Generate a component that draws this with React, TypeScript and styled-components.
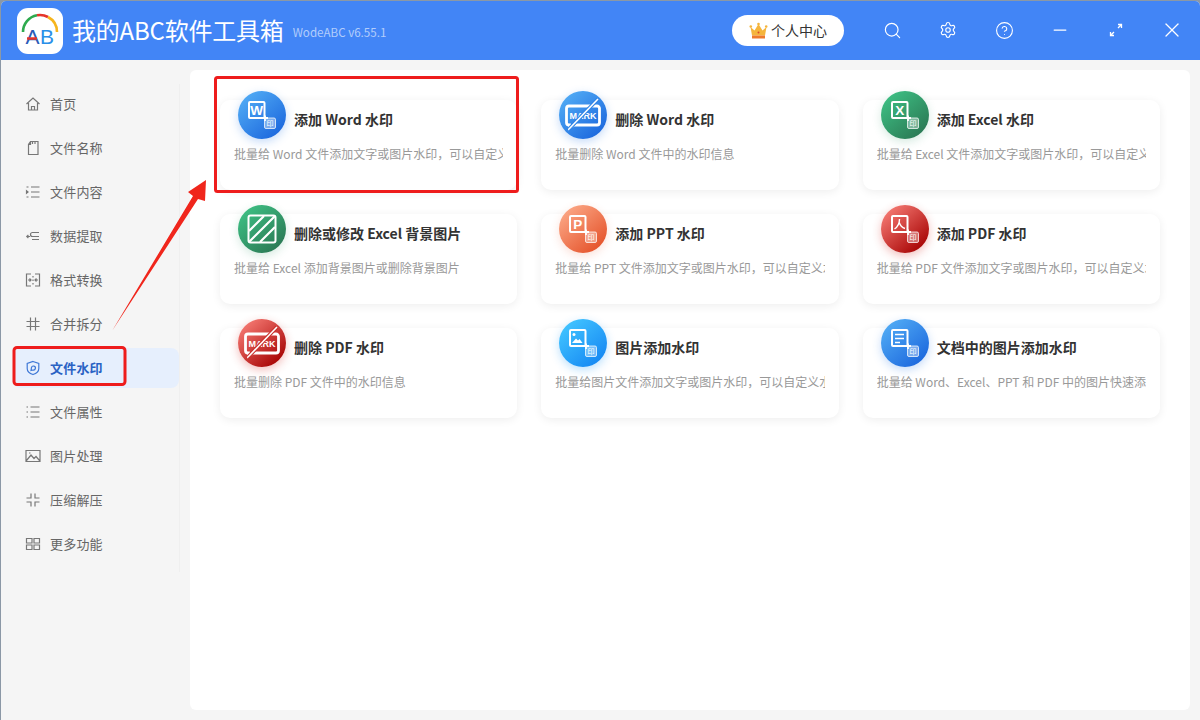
import React from "react";
import styled, { createGlobalStyle } from "styled-components";
import { Search, Settings, CircleHelp, Minus, X } from "lucide-react";

const FONT = `"Noto Sans CJK SC", "Noto Sans", sans-serif`;

const Global = createGlobalStyle`
  html, body { margin: 0; padding: 0; width: 1200px; height: 720px; overflow: hidden; background: #8b98a6; }
  #root { width: 1200px; height: 720px; }
  * { box-sizing: border-box; }
`;

const Win = styled.div`
  position: relative;
  width: 1199px;
  height: 719px;
  margin: 1px 0 0 1px;
  border-radius: 5px 5px 0 0;
  overflow: hidden;
  background: #f5f5f5;
  font-family: ${FONT};
  display: flex;
  flex-direction: column;
`;

const TitleBar = styled.header`
  height: 59px;
  flex: none;
  background: #4285f6;
  display: flex;
  align-items: center;
  padding-left: 16px;
`;
const LogoBox = styled.div`
  width: 46px;
  height: 46px;
  border-radius: 11px;
  background: #fff;
  flex: none;
  svg { display: block; }
`;
const AppName = styled.h1`
  margin: -2px 0 0 9px;
  font-size: 24px;
  line-height: 32px;
  font-weight: 400;
  color: #fff;
  letter-spacing: -0.2px;
  white-space: nowrap;
`;
const Version = styled.span`
  margin: 2px 0 0 9px;
  font-size: 11.6px;
  color: rgba(255, 255, 255, 0.6);
  white-space: nowrap;
`;
const HeadRight = styled.div`
  margin-left: auto;
  display: flex;
  align-items: center;
`;
const UserBtn = styled.button`
  width: 112px;
  height: 31px;
  border: none;
  border-radius: 16px;
  background: #fff;
  display: flex;
  align-items: center;
  justify-content: center;
  gap: 3px;
  font-family: ${FONT};
  font-size: 14px;
  color: #333;
  padding: 0 0 2px;
  margin-right: 20px;
  svg { margin-top: 2px; }
`;
const HeadIcon = styled.span`
  width: 56px;
  height: 24px;
  display: flex;
  align-items: center;
  justify-content: center;
  color: #fff;
  margin-top: -1px;
`;

const Body = styled.div`
  flex: 1;
  display: flex;
  min-height: 0;
`;
const Side = styled.nav`
  width: 189px;
  flex: none;
  padding: 24px 0 0 12px;
  display: flex;
  flex-direction: column;
`;
const SideInner = styled.div`
  width: 167px;
  display: flex;
  flex-direction: column;
  gap: 4px;
  border-right: 1px solid #efefef;
  padding-bottom: 8px;
`;
const NavItem = styled.div<{ $active?: boolean }>`
  height: 40px;
  display: flex;
  align-items: center;
  padding-left: 12px;
  gap: 9px;
  border-radius: ${(p) => (p.$active ? "8px" : "0")};
  background: ${(p) => (p.$active ? "#e6effd" : "transparent")};
  color: ${(p) => (p.$active ? "#2a62c4" : "#666")};
  font-size: 13px;
  font-weight: ${(p) => (p.$active ? 700 : 400)};
  letter-spacing: 0.2px;
  svg { flex: none; display: block; }
`;
const NavLabel = styled.span`
  margin-top: -2px;
`;

const Panel = styled.main`
  width: 1000px;
  height: 640px;
  margin-top: 10px;
  background: #fff;
  border-radius: 6px;
  padding: 29.7px 30px 0 30px;
  display: grid;
  grid-template-columns: repeat(3, 1fr);
  grid-auto-rows: 90px;
  gap: 24px;
  align-content: start;
`;
const Card = styled.article`
  min-width: 0;
  background: #fff;
  border-radius: 10px;
  box-shadow: 0 2px 10px rgba(0, 0, 0, 0.07);
  padding: 0 14px;
`;
const CardHead = styled.div`
  display: flex;
  align-items: center;
  gap: 8px;
  margin: -9px 0 0 4px;
  height: 48px;
`;
const Badge = styled.div<{ $glow: string }>`
  width: 48px;
  height: 48px;
  border-radius: 50%;
  flex: none;
  box-shadow: 0 3px 10px ${(p) => p.$glow};
  svg { display: block; }
`;
const CardTitle = styled.h3`
  margin: 9px 0 0;
  font-size: 14px;
  font-weight: 700;
  color: #333;
  white-space: nowrap;
`;
const CardDesc = styled.p`
  margin: 5px 0 0;
  font-size: 12px;
  line-height: 20px;
  color: #999;
  white-space: nowrap;
  overflow: hidden;
`;

const Overlay = styled.svg`
  position: absolute;
  left: -1px;
  top: -1px;
  pointer-events: none;
`;

const nav: [string, React.ReactNode][] = [
  ["首页", <path d="M1.500 8 8 2l6.500 6M3.500 7v7h9V7M6.500 14v-3.500h3V14" />],
  ["文件名称", <path d="M5.500 1.500h7.500v13H3.500V4.500zM5.500 1.500v3h-2M7.500 1.500v2.500M10 1.500v2.500" />],
  ["文件内容", <path d="M6 3h8.500M6 8h8.500M6 13h8.500M1.500 3h2M1.500 13h2M1.500 6.800 3 8l-1.500 1.200z" />],
  ["数据提取", <path d="M14 4.500H7.500a2 2 0 0 0 0 4H14M14 11.500H7M5 8.500H2M3.400 7l-1.600 1.500L3.400 10" />],
  ["格式转换", <path d="M6 2H1.500v12H6M10 2h4.500v12H10M8 4v1.500M8 7.500v1.500M8 11v1.500M3 8h3M10 8h3M4.500 6.500 6 8 4.500 9.500M11.500 6.500 10 8l1.500 1.500" />],
  ["合并拆分", <path d="M5.500 1.500v13M10.500 1.500v13M1.500 5.500h13M1.500 10.500h13" />],
  ["文件水印", <path d="M8 1.500l5.800 2v5c0 3-2.600 5-5.800 6-3.200-1-5.800-3-5.800-6v-5zM6 10.500l.5-3a2 2 0 1 1 1.500 2.500z" />],
  ["文件属性", <path d="M5.500 3h9M5.500 8h9M5.500 13h9M1.500 3h1.500M1.500 8h1.500M1.500 13h1.500" />],
  ["图片处理", <path d="M1 2.500h14v11H1zM1.500 12.500 6 7l3 3.500 2-2 3.500 4M4 5h1.500" />],
  ["压缩解压", <path d="M6 1.500V6H1.500M10 1.500V6h4.500M6 14.500V10H1.500M10 14.500V10h4.500" />],
  ["更多功能", <path d="M1.500 2.500h5.500v4.500H1.500zM9 2.500h5.500v4.500H9zM1.500 9h5.500v4.500H1.500zM9 9h5.500v4.500H9z" />],
];

type Tone = "blue" | "green" | "orange" | "red" | "sky";
const tones: Record<Tone, [string, string, string]> = {
  blue: ["#4fa9f4", "#1d69de", "rgba(45,125,235,.28)"],
  green: ["#3dbd82", "#2b7a55", "rgba(45,150,100,.2)"],
  orange: ["#fba583", "#e5542c", "rgba(235,100,60,.2)"],
  red: ["#f3766f", "#a80505", "rgba(215,50,45,.32)"],
  sky: ["#41c3ff", "#1689f3", "rgba(40,160,250,.32)"],
};

const DocBox = ({ children }: { children?: React.ReactNode }) => (
  <>
    <rect x="11" y="11" width="15.500" height="16" rx="1" fill="none" stroke="#fff" strokeWidth="2" />
    {children}
    <path d="M27 24.500v5.500M24.500 27h5.500" stroke="#fff" strokeWidth="1.800" />
    <rect x="26.500" y="27" width="11" height="10.500" rx="1.500" fill="rgba(255,255,255,.38)" stroke="rgba(255,255,255,.75)" strokeWidth="1" />
    <text x="32" y="35.200" fontSize="7" textAnchor="middle" fill="#fff" fontFamily={FONT}>印</text>
  </>
);
const Letter = ({ c }: { c: string }) => (
  <text x="18.700" y="24.200" fontSize="13.500" fontWeight="700" textAnchor="middle" fill="#fff" fontFamily="Liberation Sans, sans-serif">{c}</text>
);
const MarkArt = ({ fill }: { fill: string }) => (
  <>
    <path d="M10 15h28a2.500 2.500 0 0 1 2.500 2.500v14a2.500 2.500 0 0 1-2.500 2.500H15l-4.500 3v-3H10a2.500 2.500 0 0 1-2.500-2.500v-14A2.500 2.500 0 0 1 10 15z" fill="none" stroke="#fff" strokeWidth="2.800" />
    <text x="24" y="28" fontSize="9" fontWeight="700" textAnchor="middle" fill="#fff" fontFamily="Liberation Sans, sans-serif">MARK</text>
    <path d="M39 8 10 38" stroke={fill} strokeWidth="3.800" />
    <path d="M39 8 10 38" stroke="#fff" strokeWidth="1.600" />
  </>
);

type Item = { tone: Tone; title: string; desc: string; art: React.ReactNode };
const items: Item[] = [
  { tone: "blue", title: "添加 Word 水印", desc: "批量给 Word 文件添加文字或图片水印，可以自定义水印内容和位置", art: <DocBox><Letter c="W" /></DocBox> },
  { tone: "blue", title: "删除 Word 水印", desc: "批量删除 Word 文件中的水印信息", art: <MarkArt fill="#2f84e6" /> },
  { tone: "green", title: "添加 Excel 水印", desc: "批量给 Excel 文件添加文字或图片水印，可以自定义水印内容和位置", art: <DocBox><Letter c="X" /></DocBox> },
  {
    tone: "green", title: "删除或修改 Excel 背景图片", desc: "批量给 Excel 添加背景图片或删除背景图片",
    art: <>
      <rect x="10.500" y="10.500" width="27" height="27" rx="2" fill="none" stroke="#fff" strokeWidth="2" />
      <path d="M11 26 26 11M11 37 37 11M22 37 37 22" stroke="#fff" strokeWidth="2.200" />
    </>,
  },
  { tone: "orange", title: "添加 PPT 水印", desc: "批量给 PPT 文件添加文字或图片水印，可以自定义水印内容和位置", art: <DocBox><Letter c="P" /></DocBox> },
  {
    tone: "red", title: "添加 PDF 水印", desc: "批量给 PDF 文件添加文字或图片水印，可以自定义水印内容和位置",
    art: <DocBox><path d="M18.500 14c0 4-2 8-5 10M18 17c1 3 3 5.500 6 6.500" fill="none" stroke="#fff" strokeWidth="1.400" /></DocBox>,
  },
  { tone: "red", title: "删除 PDF 水印", desc: "批量删除 PDF 文件中的水印信息", art: <MarkArt fill="#c9302c" /> },
  {
    tone: "sky", title: "图片添加水印", desc: "批量给图片文件添加文字或图片水印，可以自定义水印内容和位置",
    art: <DocBox>
      <circle cx="15" cy="15.500" r="1.500" fill="#fff" />
      <path d="M13 24l4-4.500 2 2 1.500-1.500 3 4z" fill="#fff" />
    </DocBox>,
  },
  {
    tone: "blue", title: "文档中的图片添加水印", desc: "批量给 Word、Excel、PPT 和 PDF 中的图片快速添加水印内容",
    art: <DocBox><path d="M14 15.500h9M14 19.500h9M14 23.500h5" stroke="#fff" strokeWidth="1.500" /></DocBox>,
  },
];

export default function App() {
  return (
    <>
      <Global />
      <Win>
        <TitleBar>
          <LogoBox>
            <svg width="46" height="46" viewBox="0 0 46 46">
              <path d="M6 24A17 17 0 0 1 20 7.300" fill="none" stroke="#2eaa4e" strokeWidth="2.600" />
              <path d="M20 7.300A17 17 0 0 1 31 9" fill="none" stroke="#e5352b" strokeWidth="2.600" />
              <path d="M31 9A17 17 0 0 1 40 24" fill="none" stroke="#f6b51d" strokeWidth="2.600" />
              <text x="15.500" y="36" fontSize="21" textAnchor="middle" fill="#2a5bb8" fontFamily="Liberation Sans, sans-serif">A</text>
              <path d="M10 30.500h10" stroke="#e5352b" strokeWidth="2.400" />
              <text x="30" y="36" fontSize="21" textAnchor="middle" fill="#2a8fe8" fontFamily="Liberation Sans, sans-serif">B</text>
            </svg>
          </LogoBox>
          <AppName>我的ABC软件工具箱</AppName>
          <Version>WodeABC v6.55.1</Version>
          <HeadRight>
            <UserBtn>
              <svg width="19" height="18" viewBox="0 0 19 18">
                <path d="M1.500 5l4 3.500L9.500 2l4 6.500 4-3.500-1.500 8.500H3z" fill="#f5b53c" />
                <circle cx="1.800" cy="4.500" r="1.300" fill="#f5b53c" />
                <circle cx="9.500" cy="2" r="1.300" fill="#f5b53c" />
                <circle cx="17.200" cy="4.500" r="1.300" fill="#f5b53c" />
                <rect x="3" y="13.500" width="13" height="3" fill="#ee7a2c" />
                <circle cx="9.500" cy="10.500" r="1" fill="#d9482a" />
              </svg>
              个人中心
            </UserBtn>
            <HeadIcon><Search size={19} strokeWidth={1.500} /></HeadIcon>
            <HeadIcon><Settings size={18} strokeWidth={1.500} /></HeadIcon>
            <HeadIcon><CircleHelp size={19} strokeWidth={1.400} /></HeadIcon>
            <HeadIcon><Minus size={20} strokeWidth={1.500} /></HeadIcon>
            <HeadIcon>
              <svg width="14" height="14" viewBox="0 0 14 14" fill="none" stroke="#fff" strokeWidth="1.300">
                <path d="M9 1.500h3.500V5M12.500 1.500 9 5M5 12.500H1.500V9M1.500 12.500 5 9" />
              </svg>
            </HeadIcon>
            <HeadIcon><X size={24} strokeWidth={1.300} /></HeadIcon>
          </HeadRight>
        </TitleBar>
        <Body>
          <Side>
            <SideInner>
              {nav.map(([label, icon], i) => (
                <NavItem key={label} $active={i === 6}>
                  <svg width="16" height="16" viewBox="0 0 16 16" fill="none" stroke={i === 6 ? "#3f78d6" : "#777"} strokeWidth="1.200">{icon}</svg>
                  <NavLabel>{label}</NavLabel>
                </NavItem>
              ))}
            </SideInner>
          </Side>
          <Panel>
            {items.map((it, i) => (
              <Card key={it.title}>
                <CardHead>
                  <Badge $glow={tones[it.tone][2]}>
                    <svg width="48" height="48" viewBox="0 0 48 48">
                      <defs>
                        <linearGradient id={`g${i}`} x1="0.150" y1="0.100" x2="0.850" y2="0.900">
                          <stop offset="0" stopColor={tones[it.tone][0]} />
                          <stop offset="1" stopColor={tones[it.tone][1]} />
                        </linearGradient>
                      </defs>
                      <circle cx="24" cy="24" r="24" fill={`url(#g${i})`} />
                      {it.art}
                    </svg>
                  </Badge>
                  <CardTitle>{it.title}</CardTitle>
                </CardHead>
                <CardDesc>{it.desc}</CardDesc>
              </Card>
            ))}
          </Panel>
        </Body>
        <Overlay width="1200" height="720" viewBox="0 0 1200 720">
          <rect x="215.500" y="77.500" width="302" height="114" rx="2" fill="none" stroke="#ee1c1c" strokeWidth="3" />
          <rect x="14" y="347.500" width="111" height="37" rx="3" fill="none" stroke="#ee1c1c" strokeWidth="3" />
          <path d="M112 331 193 196 188 192 206 180 205 201 198 199z" fill="#f0261c" />
        </Overlay>
      </Win>
    </>
  );
}
